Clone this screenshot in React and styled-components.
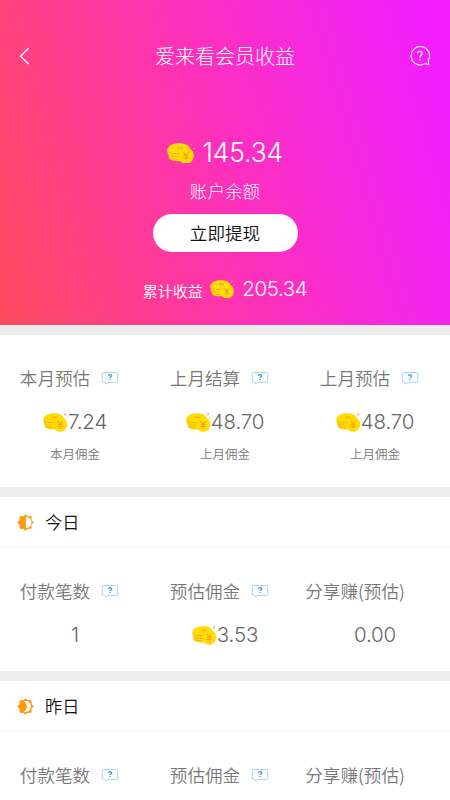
import React from "react";
import styled, { createGlobalStyle } from "styled-components";

const GlobalStyle = createGlobalStyle`
  * { box-sizing: border-box; }
  body {
    margin: 0;
    background: #ededed;
    font-family: "Noto Sans CJK SC", sans-serif;
    font-weight: 350;
    overflow: hidden;
  }
`;

const Page = styled.main`
  width: 450px;
  height: 800px;
  overflow: hidden;
  display: flex;
  flex-direction: column;
  gap: 10px;
`;

const Hero = styled.header`
  flex: none;
  height: 325px;
  padding-top: 36px;
  color: #fff;
  background: linear-gradient(74deg, #ff4a5c 0%, #ff3a98 31%, #fd30bc 50%, #f428e6 76%, #f21cff 96%);
  display: flex;
  flex-direction: column;
  align-items: center;
`;

const NavBar = styled.nav`
  align-self: stretch;
  height: 40px;
  padding: 0 19px;
  display: flex;
  align-items: center;
  justify-content: space-between;
`;

const Title = styled.h1`
  margin: 0;
  font-size: 20px;
  line-height: 40px;
  font-weight: 300;
`;

const IconButton = styled.button`
  display: flex;
  width: 22px;
  height: 22px;
  padding: 0;
  border: 0;
  background: none;
  color: inherit;
`;

const Balance = styled.div`
  margin-top: 59px;
  height: 36px;
  display: flex;
  align-items: center;
  gap: 8px;
`;

const Digits = styled.span`
  font-family: Inter, sans-serif;
  font-weight: 300;
  font-size: ${(p) => p.$size}px;
  letter-spacing: ${(p) => p.$track || 0}px;
  line-height: 1.2;
`;

const BalanceLabel = styled.div`
  height: 40px;
  line-height: 40px;
  font-size: 17.6px;
  font-weight: 300;
`;

const WithdrawButton = styled.button`
  margin-top: 3px;
  width: 145px;
  height: 38px;
  padding: 0;
  border: 0;
  border-radius: 19px;
  background: #fff;
  color: #111;
  font: 350 17.6px/38px "Noto Sans CJK SC", sans-serif;
`;

const Total = styled.div`
  margin-top: 20px;
  height: 34px;
  display: flex;
  align-items: center;
  gap: 7.5px;
  font-size: 15px;
`;

const TotalLabel = styled.span`
  padding-top: 3px;
`;

const Card = styled.section`
  flex: none;
  background: #fff;
`;

const CardHead = styled.div`
  height: 51px;
  padding-left: 17px;
  border-bottom: 1px solid #f2f2f2;
  display: flex;
  align-items: center;
  gap: 11px;
`;

const CardTitle = styled.h2`
  margin: 0;
  color: #111;
  font-size: 17.2px;
  font-weight: 350;
  line-height: 50px;
`;

const Grid = styled.div`
  display: grid;
  grid-template-columns: repeat(3, 150px);
  height: ${(p) => p.$height}px;
  padding-top: ${(p) => p.$top}px;
`;

const Cell = styled.div`
  display: flex;
  flex-direction: column;
  align-items: center;
`;

const CellLabel = styled.div`
  height: 30px;
  display: flex;
  align-items: center;
  white-space: nowrap;
  color: #777;
  font-size: 17.6px;
  line-height: 30px;
`;

const HintSlot = styled.span`
  width: 40px;
  height: 30px;
  display: flex;
  align-items: center;
  justify-content: center;
`;

const CellValue = styled.div`
  margin-top: 14px;
  height: 30px;
  display: flex;
  align-items: center;
  color: #666;
`;

const CellNote = styled.div`
  margin-top: 6px;
  height: 22px;
  color: #777;
  font-size: 12.5px;
  line-height: 22px;
`;

const BackIcon = () => (
  <svg width="22" height="22" viewBox="0 0 22 22" fill="none" stroke="currentColor" strokeWidth="1.4">
    <path d="M9.5 3.3 1.6 11.2l7.9 7.9" />
  </svg>
);

const HelpIcon = () => (
  <svg width="22" height="22" viewBox="0 0 22 22" fill="none" stroke="currentColor" strokeWidth="1.1">
    <path d="M16.6 18.3A9.2 9.2 0 1 1 19.6 14.8c-.5 1.2-.3 2.8.1 4.8q-1.8.1-3.1-1.3" />
    <path d="M8.6 8.7c0-3.4 4.6-3.1 4.6-.5 0 1.9-2.200 2.100-2.200 4.200M11 14.100v1.300" />
  </svg>
);

const Coins = ({ width = 24, spark = "#ff6b4a", line = "#ff9f14" }) => (
  <svg width={width} height={width * 0.76} viewBox="0 0 27 20" preserveAspectRatio="none" fill="none">
    <path
      fill="#ffdc05"
      d="M.2 6.800C1 2.500 5.600.2 11.400.2c5.600 0 10.200 1.400 11 5.200 2.500 1.300 3.900 3.800 3.900 6.700 0 4.300-3.400 7.700-7.700 7.700-2.200 0-4.200-.9-5.600-2.400-5.700.5-10.300-.7-11.200-3.400.3-1.100-.6-1.900-.5-3C.2 10.200 1 9.500.6 8.500.2 8 .1 7.500.2 6.800Z"
    />
    <path
      stroke={line}
      strokeWidth=".8"
      d="M1 8.200c2.500 2 6.500 2.500 10.800 1.800M1.600 11c2.500 1.700 5.800 2.200 9 1.700M2.200 13.900c2.500 1.400 5.400 1.700 8.500 1.500M10 3.600l2.500.8 2.500-1M10 5h5.500"
    />
    <path stroke={line} strokeWidth="1.100" d="m16 8.600 2.600 3.200 2.600-3.200M16 12.100h5.200M16 14.200h5.200M18.600 11.800v4.700" />
    <path stroke={spark} strokeWidth="1.200" d="m24.300.6-.8 1.900" />
    <path stroke="#ffbf2e" strokeWidth=".9" d="m26.500 4.900-.6 1.400" />
  </svg>
);

const Hint = () => (
  <svg width="18" height="14" viewBox="0 0 18 14" fill="none">
    <path
      stroke="#a6d5fb"
      d="M2.300 1.500h13.400q1 0 1 1v7.900q0 1-1 1H7L4.700 13.100l-.6-1.700H2.300q-1 0-1-1V2.500q0-1 1-1Z"
    />
    <path stroke="#399df0" strokeWidth="1.300" d="M7.500 5c0-2 3.100-1.800 3.100-.2 0 1.200-1.500 1.200-1.500 2.300M9.100 7.900v1.200" />
  </svg>
);

const GEAR = "M8 .8 10.100 2.500h3.100v3.300L15.200 8l-2 2.200v3.300h-3.100L8 15.200l-2.100-1.700H2.800v-3.300L.8 8l2-2.200V2.500h3.100Z";

const DayIcon = ({ moon }) => (
  <svg width="17" height="17" viewBox="0 0 16 16">
    <path fill="#ff9a0a" stroke="#ff9a0a" strokeWidth=".9" strokeLinejoin="round" d={GEAR} />
    <path fill="#fff" d={moon ? "M6.300 3C15.300 1.200 15.300 14.800 6.300 13 10.300 10.700 10.300 5.300 6.300 3Z" : "M8.300 2.600a5.400 5.400 0 0 1 0 10.800Z"} />
  </svg>
);

const Stat = ({ label, value, note, hint = true, coins = true }) => (
  <Cell>
    <CellLabel>
      {label}
      <HintSlot>{hint && <Hint />}</HintSlot>
    </CellLabel>
    <CellValue>
      {coins && <Coins width={25} />}
      <Digits $size={20.5} $track={-0.15}>{value}</Digits>
    </CellValue>
    {note && <CellNote>{note}</CellNote>}
  </Cell>
);

const DayCard = ({ title, moon, stats }) => (
  <Card>
    <CardHead>
      <DayIcon moon={moon} />
      <CardTitle>{title}</CardTitle>
    </CardHead>
    <Grid $height={123} $top={28}>
      <Stat label="付款笔数" value={stats?.count} coins={false} />
      <Stat label="预估佣金" value={stats?.commission} coins={Boolean(stats)} />
      <Stat label="分享赚(预估)" value={stats?.share} hint={false} coins={false} />
    </Grid>
  </Card>
);

export default function App() {
  return (
    <>
      <GlobalStyle />
      <Page>
        <Hero>
          <NavBar>
            <IconButton aria-label="返回"><BackIcon /></IconButton>
            <Title>爱来看会员收益</Title>
            <IconButton aria-label="帮助"><HelpIcon /></IconButton>
          </NavBar>
          <Balance>
            <Coins width={27.5} spark="#ff9d35" line="#f3a51a" />
            <Digits $size={26.3} $track={-0.1}>145.34</Digits>
          </Balance>
          <BalanceLabel>账户余额</BalanceLabel>
          <WithdrawButton>立即提现</WithdrawButton>
          <Total>
            <TotalLabel>累计收益</TotalLabel>
            <Coins width={24.5} spark="#ff9d35" line="#f3a51a" />
            <Digits $size={20.5} $track={-0.4}>205.34</Digits>
          </Total>
        </Hero>
        <Card>
          <Grid $height={152} $top={28}>
            <Stat label="本月预估" value="7.24" note="本月佣金" />
            <Stat label="上月结算" value="48.70" note="上月佣金" />
            <Stat label="上月预估" value="48.70" note="上月佣金" />
          </Grid>
        </Card>
        <DayCard title="今日" stats={{ count: "1", commission: "3.53", share: "0.00" }} />
        <DayCard title="昨日" moon />
      </Page>
    </>
  );
}
